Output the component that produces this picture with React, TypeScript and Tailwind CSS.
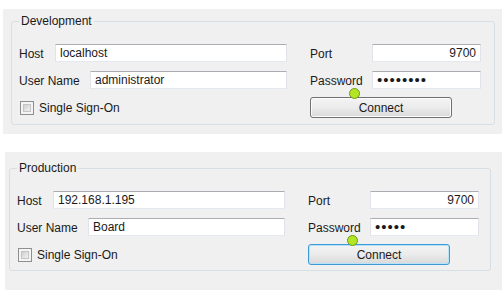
const font = "font-['Liberation_Sans',Arial,sans-serif]";

type GroupProps = {
  title: string;
  host: string;
  user: string;
  dots: number;
  focused?: boolean;
  panelClass: string;
  boxClass: string;
};

function TextBox({ value, className, right }: { value: string; className: string; right?: boolean }) {
  return (
    <div
      className={`${className} h-[18px] flex items-center bg-white border border-[#e2e3ea] border-t-[#abadb3] border-b-[#e3e9ef] px-[4px] text-[12px] leading-[16px] text-[#1a1a1a] ${
        right ? 'justify-end' : ''
      }`}
    >
      {value}
    </div>
  );
}

function Label({ text, className }: { text: string; className: string }) {
  return <span className={`${className} shrink-0 text-[12px] leading-[18px] pt-[1px] text-[#1a1a1a]`}>{text}</span>;
}

function Group({ title, host, user, dots, focused, panelClass, boxClass }: GroupProps) {
  return (
    <div className={`${panelClass} bg-[#f0f0f0] flex flex-col`}>
      <fieldset className={`${boxClass} border border-[#d5dfe5] rounded-[3px] pt-[16px] pl-[7px]`}>
        <legend className="px-[2px] text-[12px] leading-[14px] text-[#1a1a1a]">{title}</legend>
        <div className="flex gap-[23px]">
          <div className="w-[268px] flex flex-col gap-[9px]">
            <div className="flex items-center h-[18px]">
              <Label text="Host" className="w-[36px]" />
              <TextBox value={host} className="flex-1" />
            </div>
            <div className="flex items-center h-[18px]">
              <Label text="User Name" className="w-[71px]" />
              <TextBox value={user} className="flex-1" />
            </div>
            <div className="h-[21px] -mt-[1px] flex items-center gap-[5px] pl-[1px]">
              <div className="w-[14px] h-[14px] shrink-0 border border-[#8f8f8f] bg-[#f4f4f4] p-[2px]">
                <div className="w-full h-full bg-gradient-to-br from-[#cfcfcf] to-[#f2f2f2] border border-[#c4c4c4]" />
              </div>
              <span className="text-[12px] text-[#1a1a1a]">Single Sign-On</span>
            </div>
          </div>
          <div className="w-[171px] flex flex-col gap-[9px]">
            <div className="flex items-center h-[18px]">
              <Label text="Port" className="w-[62px]" />
              <TextBox value="9700" className="w-[109px]" right />
            </div>
            <div className="flex items-center h-[18px]">
              <Label text="Password" className="w-[62px]" />
              <TextBox value={'•'.repeat(dots)} className="w-[109px] text-[15px] tracking-[1px]" />
            </div>
            <div className="relative h-[21px] -mt-[1px]">
              <button
                className={`block w-[142px] h-[21px] rounded-[3px] border text-[12px] text-[#1a1a1a] bg-gradient-to-b from-[#f4f4f4] via-[#ebebeb] to-[#d9d9d9] ${
                  focused ? 'border-[#3c9bd6] shadow-[inset_0_0_0_1px_#b7e2f8]' : 'border-[#707070] shadow-[inset_0_0_0_1px_#fcfcfc]'
                }`}
              >
                Connect
              </button>
              <div className="absolute left-[39px] top-[-9px] w-[11px] h-[11px] rounded-full bg-[#b2e524] border border-[#6f9a16]" />
            </div>
          </div>
        </div>
      </fieldset>
    </div>
  );
}

export default function App() {
  return (
    <div className={`${font} w-[502px] h-[290px] bg-white flex flex-col overflow-hidden`}>
      <Group
        title="Development"
        host="localhost"
        user="administrator"
        dots={8}
        panelClass="ml-[3px] mt-[9px] h-[125px]"
        boxClass="ml-[8px] mt-[5px] w-[484px] h-[111px]"
      />
      <Group
        title="Production"
        host="192.168.1.195"
        user="Board"
        dots={5}
        focused
        panelClass="ml-[5px] mt-[18px] h-[138px]"
        boxClass="ml-[4px] mt-[9px] w-[482px] h-[110px]"
      />
    </div>
  );
}
